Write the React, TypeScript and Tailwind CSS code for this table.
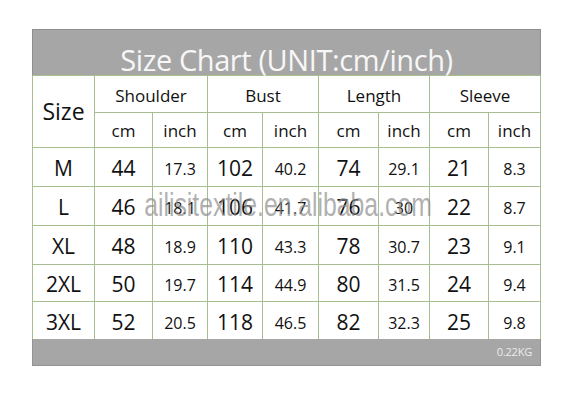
import React from 'react'

const rows: string[][] = [
  ['M', '44', '17.3', '102', '40.2', '74', '29.1', '21', '8.3'],
  ['L', '46', '18.1', '106', '41.7', '76', '30', '22', '8.7'],
  ['XL', '48', '18.9', '110', '43.3', '78', '30.7', '23', '9.1'],
  ['2XL', '50', '19.7', '114', '44.9', '80', '31.5', '24', '9.4'],
  ['3XL', '52', '20.5', '118', '46.5', '82', '32.3', '25', '9.8'],
]

const groups = ['Shoulder', 'Bust', 'Length', 'Sleeve']

function cellClass(i: number): string {
  if (i === 0) return 'text-[21px]'
  if (i % 2 === 1) return 'text-[21px]'
  return 'text-[16px]'
}

export default function App(): React.JSX.Element {
  return (
    <div className="w-[577px] h-[413px] bg-white pt-[29px] pl-[32px] font-['Open_Sans','Noto_Sans',sans-serif] text-[#111]">
      <div className="relative w-[509px]">
        {/* title band */}
        <div className="h-[46px] bg-[#a6a6a6] border-t border-x border-[#8f8f8f] flex items-end justify-center">
          <span className="text-[29px] leading-none text-[#f7f7f7] tracking-[-0.4px] pb-[1px]">
            Size Chart (UNIT:cm/inch)
          </span>
        </div>

        <div className="grid grid-cols-[61px_57px_54px_54px_55px_59px_50px_58px_51px] grid-rows-[36px_34px_38px_38px_38px_36px_37px] gap-px bg-[#a7bf90] px-px pt-px">
          <div className="row-span-2 bg-white flex items-center justify-center text-[23px]">Size</div>
          {groups.map((g) => (
            <div key={g} className="col-span-2 bg-white flex items-center justify-center pt-[4px] text-[17px]">
              {g}
            </div>
          ))}
          {groups.map((g) => (
            <React.Fragment key={g + '-u'}>
              <div className="bg-white flex items-center justify-center pt-[2px] text-[17px]">cm</div>
              <div className="bg-white flex items-center justify-center pt-[2px] text-[17px]">inch</div>
            </React.Fragment>
          ))}
          {rows.map((r) =>
            r.map((v, i) => (
              <div
                key={r[0] + '-' + i}
                className={`bg-white flex items-center justify-center pt-[4px] ${cellClass(i)}`}
              >
                {v}
              </div>
            )),
          )}
        </div>

        {/* footer band */}
        <div className="h-[27px] bg-[#a6a6a6] border-b border-x border-[#939393] flex items-center justify-end pr-[8px]">
          <span className="text-[11px] text-[#ececec] tracking-[-0.2px]">0.22KG</span>
        </div>

        {/* watermark */}
        <div className="absolute left-[56px] top-[159px] w-[400px] text-center font-['Liberation_Sans',Arial,sans-serif] text-[33px] leading-none text-[#8d8d8d]/70 scale-x-[0.75] pointer-events-none">
          ailisitextile.en.alibaba.com
        </div>
      </div>
    </div>
  )
}
